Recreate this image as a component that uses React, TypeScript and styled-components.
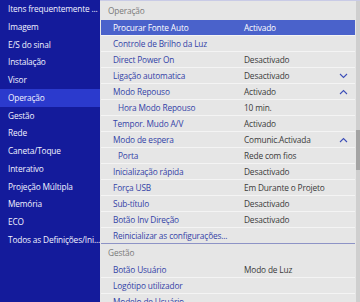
import React from "react";
import styled, { createGlobalStyle } from "styled-components";

const Global = createGlobalStyle`
  html, body { margin: 0; padding: 0; background: #e6e6e6; }
  body { font-family: "Open Sans", "Noto Sans", sans-serif; }
`;

const Screen = styled.div`
  width: 360px;
  height: 302px;
  display: flex;
  overflow: hidden;
  font-size: 8.3px;
  letter-spacing: -0.15px;
`;

const Sidebar = styled.div`
  width: 100px;
  flex-shrink: 0;
  background: #141b9b;
  display: flex;
  flex-direction: column;
`;

const SideItem = styled.div<{ $active?: boolean }>`
  height: 17.75px;
  line-height: 17.75px;
  padding-left: 8px;
  color: #f2f3ff;
  white-space: nowrap;
  background: ${(p) => (p.$active ? "#2b3acd" : "transparent")};
`;

const Panel = styled.div`
  flex: 1;
  display: flex;
  background: #e6e6e6;
  border-top: 1px solid #c9cbe6;
`;

const List = styled.div`
  flex: 1;
  display: flex;
  flex-direction: column;
  padding-left: 1px;
`;

const Scroll = styled.div`
  width: 4px;
  margin-left: 1px;
  background: #cfcfcf;
  display: flex;
  flex-direction: column;
`;

const Thumb = styled.div`
  margin-top: 129px;
  height: 40px;
  background: #a4a4a4;
`;

const Header = styled.div<{ $h: number }>`
  height: ${(p) => p.$h}px;
  line-height: ${(p) => p.$h}px;
  padding-left: 7px;
  color: #7a7a7a;
  flex-shrink: 0;
`;

const Row = styled.div<{ $active?: boolean; $sep?: boolean }>`
  height: 16px;
  flex-shrink: 0;
  display: grid;
  grid-template-columns: 143px 1fr 20px;
  align-items: center;
  box-sizing: border-box;
  border-bottom: 1px solid ${(p) => (p.$sep ? "#8d93c6" : "#f4f4f4")};
  background: ${(p) => (p.$active ? "#4a62cb" : "transparent")};
  color: ${(p) => (p.$active ? "#ffffff" : "#3342a6")};
`;

const Label = styled.span<{ $indent?: boolean }>`
  padding-left: ${(p) => (p.$indent ? 17 : 12)}px;
  white-space: nowrap;
`;

const Value = styled.span<{ $active?: boolean }>`
  color: ${(p) => (p.$active ? "#ffffff" : "#3a3a3a")};
  white-space: nowrap;
`;

const Icon = styled.span`
  display: flex;
  padding-left: 4px;
`;

const Chevron = ({ up }: { up?: boolean }) => (
  <svg width="9" height="6" viewBox="0 0 9 6">
    <path
      d={up ? "M1 5 L4.5 1.5 L8 5" : "M1 1 L4.5 4.5 L8 1"}
      fill="none"
      stroke="#3d4fb8"
      strokeWidth="1.1"
    />
  </svg>
);

const sideItems = [
  "Itens frequentemente ...",
  "Imagem",
  "E/S do sinal",
  "Instalação",
  "Visor",
  "Operação",
  "Gestão",
  "Rede",
  "Caneta/Toque",
  "Interativo",
  "Projeção Múltipla",
  "Memória",
  "ECO",
  "Todos as Definições/Ini...",
];

type Item = { label: string; value?: string; indent?: boolean; chevron?: "up" | "down" };

const operacao: Item[] = [
  { label: "Procurar Fonte Auto", value: "Activado" },
  { label: "Controle de Brilho da Luz" },
  { label: "Direct Power On", value: "Desactivado" },
  { label: "Ligação automatica", value: "Desactivado", chevron: "down" },
  { label: "Modo Repouso", value: "Activado", chevron: "up" },
  { label: "Hora Modo Repouso", value: "10 min.", indent: true },
  { label: "Tempor. Mudo A/V", value: "Activado" },
  { label: "Modo de espera", value: "Comunic.Activada", chevron: "up" },
  { label: "Porta", value: "Rede com fios", indent: true },
  { label: "Inicialização rápida", value: "Desactivado" },
  { label: "Força USB", value: "Em Durante o Projeto" },
  { label: "Sub-título", value: "Desactivado" },
  { label: "Botão Inv Direção", value: "Desactivado" },
  { label: "Reinicializar as configurações..." },
];

const gestao: Item[] = [
  { label: "Botão Usuário", value: "Modo de Luz" },
  { label: "Logótipo utilizador" },
  { label: "Modelo de Usuário" },
];

export default function App() {
  return (
    <Screen>
      <Global />
      <Sidebar>
        {sideItems.map((s) => (
          <SideItem key={s} $active={s === "Operação"}>
            {s}
          </SideItem>
        ))}
      </Sidebar>
      <Panel>
        <List>
          <Header $h={19}>Operação</Header>
          {operacao.map((it, i) => (
            <Row key={it.label} $active={i === 0} $sep={i === operacao.length - 1}>
              <Label $indent={it.indent}>{it.label}</Label>
              <Value $active={i === 0}>{it.value}</Value>
              <Icon>{it.chevron && <Chevron up={it.chevron === "up"} />}</Icon>
            </Row>
          ))}
          <Header $h={18}>Gestão</Header>
          {gestao.map((it) => (
            <Row key={it.label}>
              <Label>{it.label}</Label>
              <Value>{it.value}</Value>
              <Icon />
            </Row>
          ))}
        </List>
        <Scroll>
          <Thumb />
        </Scroll>
      </Panel>
    </Screen>
  );
}
